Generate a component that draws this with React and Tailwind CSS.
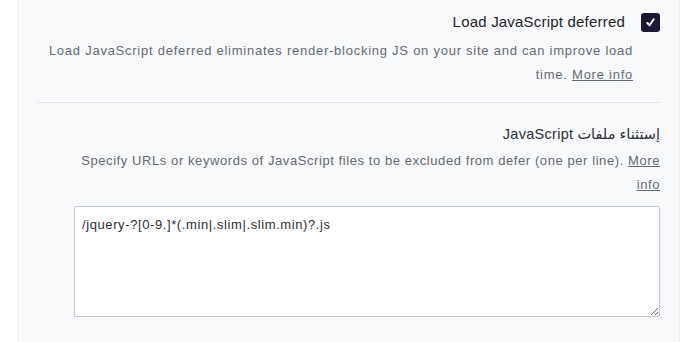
import React from 'react';

const font = { fontFamily: '"Liberation Sans", "DejaVu Sans", sans-serif' };

const App = () => {
  return (
    <div dir="rtl" className="min-h-screen bg-white" style={font}>
      <div className="ml-[17px] mr-[20px] min-h-[342px] border-x border-[#eceef2] bg-[#f8f9fb] px-[19px]">
        <div className="pt-[12px]">
          <div className="flex items-center gap-[16px]">
            <span className="flex h-[19px] w-[19px] items-center justify-center rounded-[3px] bg-[#1e1636]">
              <svg viewBox="0 0 12 12" className="h-[11px] w-[11px]" fill="none" stroke="white" strokeWidth="2.2" strokeLinecap="round" strokeLinejoin="round">
                <path d="M2.5 6.5 L5 9 L9.5 2.5" />
              </svg>
            </span>
            <span className="text-[15px] leading-[20px] tracking-[0.2px] text-[#1f2329]">Load JavaScript deferred</span>
          </div>
          <p className="mr-[27px] mt-[7px] w-[592px] text-[13px] leading-[24px] tracking-[0.75px] text-[#666a70]">
            Load JavaScript deferred eliminates render-blocking JS on your site and can improve load time.{' '}
            <a href="#" className="underline">More info</a>
          </p>
        </div>
        <div className="mt-[15px] border-t border-[#e2e4e9]" />
        <div className="ml-[37px] pt-[19px]">
          <div className="text-[14.5px] leading-[24px] tracking-[0.3px] text-[#2c3036]">إستثناء ملفات JavaScript</div>
          <p className="mt-[3px] text-[13px] leading-[24px] tracking-[0.58px] text-[#666a70]">
            Specify URLs or keywords of JavaScript files to be excluded from defer (one per line).{' '}
            <a href="#" className="underline">More info</a>
          </p>
          <textarea
            dir="ltr"
            className="mt-[9px] block h-[111px] w-full rounded-[2px] border border-[#c3c7cf] bg-white px-[7px] py-[8px] text-[13px] leading-[20px] tracking-[0.6px] text-[#2c3036] outline-none"
            defaultValue="/jquery-?[0-9.]*(.min|.slim|.slim.min)?.js"
            style={font}
          />
        </div>
      </div>
    </div>
  );
};

export default App;
